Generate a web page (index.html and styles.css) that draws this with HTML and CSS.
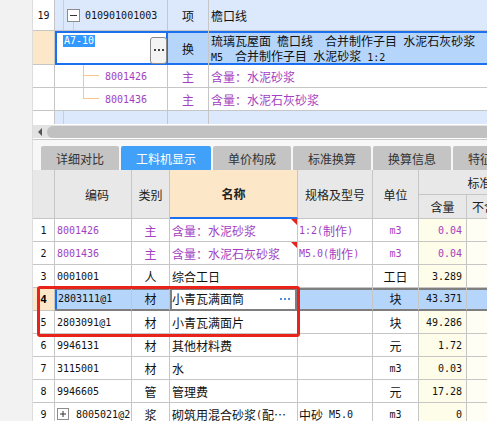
FILE: index.html
```html
<!DOCTYPE html>
<html lang="zh-CN">
<head>
<meta charset="utf-8">
<title>工料机显示</title>
<link rel="stylesheet" href="styles.css">
</head>
<body>
<div class="app">
  <div class="side"></div>
  <div class="main">
    <div class="tree">
      <div class="trow r19">
        <div class="c num"><span class="n">19</span></div>
        <div class="c code">
          <svg class="tl" width="30" height="31" viewBox="0 0 30 31">
            <line x1="8.5" y1="0" x2="8.5" y2="31" stroke="#f8c58a"/>
            <line x1="18.5" y1="22" x2="18.5" y2="31" stroke="#f8c58a"/>
            <rect x="12.5" y="9.5" width="12" height="12" fill="#fff" stroke="#8c8c8c"/>
            <line x1="15" y1="15.5" x2="22" y2="15.5" stroke="#333"/>
          </svg>
          <span class="n">010901001003</span>
        </div>
        <div class="c kind">项</div>
        <div class="c name">檐口线</div>
      </div>
      <div class="trow ra">
        <div class="c num cur"></div>
        <div class="c code edit">
          <span class="n seltext">A7-10</span>
          <span class="more">
            <svg width="10" height="3" viewBox="0 0 10 3">
              <rect x="0" y="0" width="2" height="2" fill="#444"/>
              <rect x="4" y="0" width="2" height="2" fill="#444"/>
              <rect x="8" y="0" width="2" height="2" fill="#444"/>
            </svg>
          </span>
        </div>
        <div class="c kind hl bar">换</div>
        <div class="c name hl bar two">
          <span>琉璃瓦屋面<span class="n"> </span>檐口线<span class="n">  </span>合并制作子目<span class="n"> </span>水泥石灰砂浆</span>
          <span><span class="n">M5  </span>合并制作子目<span class="n"> </span>水泥砂浆<span class="n"> 1:2</span></span>
        </div>
      </div>
      <div class="trow rb">
        <div class="c num w"></div>
        <div class="c code w">
          <svg class="tl" width="50" height="22" viewBox="0 0 50 22">
            <line x1="28.5" y1="0" x2="28.5" y2="22" stroke="#f8c58a"/>
            <line x1="28" y1="10.5" x2="44" y2="10.5" stroke="#f8c58a"/>
          </svg>
          <span class="n p">8001426</span>
        </div>
        <div class="c kind w p">主</div>
        <div class="c name w p">含量：水泥砂浆</div>
      </div>
      <div class="trow rb">
        <div class="c num w"></div>
        <div class="c code w">
          <svg class="tl" width="50" height="22" viewBox="0 0 50 22">
            <line x1="28.5" y1="0" x2="28.5" y2="11" stroke="#f8c58a"/>
            <line x1="28" y1="10.5" x2="44" y2="10.5" stroke="#f8c58a"/>
          </svg>
          <span class="n p">8001436</span>
        </div>
        <div class="c kind w p">主</div>
        <div class="c name w p">含量：水泥石灰砂浆</div>
      </div>
      <div class="trow re">
        <div class="c num w"></div>
        <div class="c code">
          <svg class="tl" width="30" height="13" viewBox="0 0 30 13">
            <line x1="8.5" y1="0" x2="8.5" y2="13" stroke="#f8c58a"/>
          </svg>
        </div>
        <div class="c kind"></div>
        <div class="c name"></div>
      </div>
    </div>

    <div class="hs">
      <div class="track">
        <span class="arrow"></span>
        <span class="thumb"></span>
      </div>
    </div>

    <div class="tabs">
      <div class="tab">详细对比</div>
      <div class="tab on">工料机显示</div>
      <div class="tab">单价构成</div>
      <div class="tab">标准换算</div>
      <div class="tab">换算信息</div>
      <div class="tab">特征</div>
    </div>

    <div class="grid">
      <div class="ghead">
        <div class="h hnum"></div>
        <div class="h hcode">编码</div>
        <div class="h hkind">类别</div>
        <div class="h hname">名称</div>
        <div class="h hspec">规格及型号</div>
        <div class="h hunit">单位</div>
        <div class="h hstd">标准</div>
        <div class="h hqty">含量</div>
        <div class="h hother">不含税</div>
      </div>

      <div class="grow">
        <div class="c num"><span class="n">1</span></div>
        <div class="c code"><span class="n p">8001426</span></div>
        <div class="c kind p">主</div>
        <div class="c name p tri">含量：水泥砂浆</div>
        <div class="c spec p"><span class="n">1:2(</span>制作<span class="n">)</span></div>
        <div class="c unit p"><span class="n">m3</span></div>
        <div class="c qty p"><span class="n">0.04</span></div>
        <div class="c last"></div>
      </div>
      <div class="grow">
        <div class="c num"><span class="n">2</span></div>
        <div class="c code"><span class="n p">8001436</span></div>
        <div class="c kind p">主</div>
        <div class="c name p tri">含量：水泥石灰砂浆</div>
        <div class="c spec p"><span class="n">M5.0(</span>制作<span class="n">)</span></div>
        <div class="c unit p"><span class="n">m3</span></div>
        <div class="c qty p"><span class="n">0.04</span></div>
        <div class="c last"></div>
      </div>
      <div class="grow">
        <div class="c num"><span class="n">3</span></div>
        <div class="c code"><span class="n">0001001</span></div>
        <div class="c kind">人</div>
        <div class="c name">综合工日</div>
        <div class="c spec"></div>
        <div class="c unit">工日</div>
        <div class="c qty"><span class="n">3.289</span></div>
        <div class="c last"></div>
      </div>
      <div class="grow sel">
        <div class="c num cur"><span class="n b">4</span></div>
        <div class="c code hl lb"><span class="n">2803111@1</span></div>
        <div class="c kind hl">材</div>
        <div class="c name ed">小青瓦满面筒
          <svg class="dots" width="10" height="2" viewBox="0 0 10 2">
            <rect x="0" y="0" width="2" height="2" fill="#4a8fdc"/>
            <rect x="4" y="0" width="2" height="2" fill="#4a8fdc"/>
            <rect x="8" y="0" width="2" height="2" fill="#4a8fdc"/>
          </svg>
        </div>
        <div class="c spec hl"></div>
        <div class="c unit hl">块</div>
        <div class="c qty hl"><span class="n">43.371</span></div>
        <div class="c last hl"></div>
      </div>
      <div class="grow">
        <div class="c num"><span class="n">5</span></div>
        <div class="c code"><span class="n">2803091@1</span></div>
        <div class="c kind">材</div>
        <div class="c name">小青瓦满面片</div>
        <div class="c spec"></div>
        <div class="c unit">块</div>
        <div class="c qty"><span class="n">49.286</span></div>
        <div class="c last"></div>
      </div>
      <div class="grow">
        <div class="c num"><span class="n">6</span></div>
        <div class="c code"><span class="n">9946131</span></div>
        <div class="c kind">材</div>
        <div class="c name">其他材料费</div>
        <div class="c spec"></div>
        <div class="c unit">元</div>
        <div class="c qty"><span class="n">1.72</span></div>
        <div class="c last"></div>
      </div>
      <div class="grow">
        <div class="c num"><span class="n">7</span></div>
        <div class="c code"><span class="n">3115001</span></div>
        <div class="c kind">材</div>
        <div class="c name">水</div>
        <div class="c spec"></div>
        <div class="c unit"><span class="n">m3</span></div>
        <div class="c qty"><span class="n">0.03</span></div>
        <div class="c last"></div>
      </div>
      <div class="grow">
        <div class="c num"><span class="n">8</span></div>
        <div class="c code"><span class="n">9946605</span></div>
        <div class="c kind">管</div>
        <div class="c name">管理费</div>
        <div class="c spec"></div>
        <div class="c unit">元</div>
        <div class="c qty"><span class="n">17.28</span></div>
        <div class="c last"></div>
      </div>
      <div class="grow">
        <div class="c num"><span class="n">9</span></div>
        <div class="c code">
          <svg class="plus" width="12" height="12" viewBox="0 0 12 12">
            <rect x="0.5" y="0.5" width="11" height="11" fill="#fff" stroke="#8c8c8c"/>
            <line x1="3" y1="6" x2="9" y2="6" stroke="#333"/>
            <line x1="6" y1="3" x2="6" y2="9" stroke="#333"/>
          </svg>
          <span class="n">8005021@2</span>
        </div>
        <div class="c kind">浆</div>
        <div class="c name">砌筑用混合砂浆<span class="n">(</span>配…</div>
        <div class="c spec">中砂<span class="n"> M5.0</span></div>
        <div class="c unit"><span class="n">m3</span></div>
        <div class="c qty"><span class="n">0</span></div>
        <div class="c last"></div>
      </div>
    </div>

    <div class="redbox"></div>
  </div>
</div>
</body>
</html>
```

FILE: styles.css
```css
* {
  box-sizing: border-box;
  margin: 0;
  padding: 0;
}

html,
body {
  width: 487px;
  height: 421px;
  overflow: hidden;
  background: #fff;
}

body {
  font-family: "Noto Sans CJK SC", "Noto Sans", sans-serif;
  font-size: 12px;
  color: #111;
}

.app {
  display: flex;
  height: 421px;
}

.side {
  width: 33px;
  flex: none;
  background: #f2f2f2;
  border-right: 1px solid #dddddd;
}

.main {
  position: relative;
  width: 454px;
  flex: none;
  overflow: hidden;
}

.n {
  font-family: "DejaVu Sans Mono", "Liberation Mono", monospace;
  font-size: 10px;
  white-space: pre;
}

.b {
  font-weight: 700;
  font-size: 11px;
}

.p {
  color: #a33fc2;
}

/* ---------- generic cell ---------- */
.c {
  display: flex;
  align-items: center;
  white-space: nowrap;
  overflow: hidden;
  border-right: 1px solid #c6c6c6;
  border-bottom: 1px solid #c6c6c6;
  position: relative;
}

/* ---------- top tree grid ---------- */
.tree {
  width: 454px;
}

.trow {
  display: grid;
  grid-template-columns: 22px 113px 41px 300px;
}

.trow .c {
  background: #dce9fc;
}

.trow .num {
  background: #fff;
  justify-content: center;
}

.trow .kind {
  justify-content: center;
}

.trow .name {
  padding-left: 2px;
}

.trow .w {
  background: #fff;
}

.r19 {
  height: 31px;
}

.tl {
  flex: none;
  display: block;
  align-self: flex-start;
}

.ra {
  height: 34px;
}

.ra .cur {
  background: #fde7c9;
}

.ra .edit {
  background: #fff;
  border: none;
  box-shadow: inset 0 0 0 2px #1b6ff0;
  align-items: flex-start;
  padding: 4px 1px 0 8px;
}

.seltext {
  background: #3399ff;
  color: #fff;
  line-height: 12px;
  padding: 0 1px;
}

.more {
  margin-left: auto;
  align-self: center;
  width: 17px;
  height: 27px;
  border: 1px solid #8a8a8a;
  border-radius: 3px;
  background: #f4f4f4;
  display: flex;
  align-items: center;
  justify-content: center;
}

.more svg {
  display: block;
}

.trow .hl {
  background: #b6d5fb;
}

.bar {
  border-bottom: none;
  box-shadow: inset 0 2px 0 #1b6ff0, inset 0 -2px 0 #1b6ff0;
}

.two {
  flex-direction: column;
  align-items: flex-start;
  justify-content: center;
  line-height: 13px;
  padding-top: 1px;
}

.rb {
  height: 23px;
}

.re {
  height: 13px;
}

.re .c {
  border-bottom: none;
}

/* ---------- horizontal scrollbar ---------- */
.hs {
  height: 16px;
  padding-top: 1px;
  border-bottom: 1px solid #c8c8c8;
  background: #fff;
}

.track {
  height: 13px;
  background: #e2e2e2;
  display: flex;
  align-items: center;
  padding-left: 5px;
}

.arrow {
  width: 0;
  height: 0;
  border-top: 4px solid transparent;
  border-bottom: 4px solid transparent;
  border-right: 4px solid #555;
  flex: none;
}

.thumb {
  flex: 1;
  height: 12px;
  margin-left: 5px;
  border-radius: 6px 0 0 6px;
  background: #c1c1c1;
}

/* ---------- tabs ---------- */
.tabs {
  height: 30px;
  display: flex;
  gap: 2px;
  padding: 6px 0 0 8px;
  background: #f7f7f7;
  overflow: hidden;
}

.tab {
  flex: none;
  height: 24px;
  padding: 0 15px;
  display: flex;
  align-items: center;
  background: #c4c4c4;
  color: #333;
  border-radius: 2px 2px 0 0;
}

.tab.on {
  background: #41a0f8;
  color: #fff;
}

/* ---------- bottom grid ---------- */
.grid {
  width: 508px;
}

.ghead {
  display: grid;
  grid-template-columns: 22px 77px 38px 128px 75px 46px 48px 74px;
  grid-template-rows: 25px 24px;
}

.h {
  background: #e8e8e8;
  border-right: 1px solid #c6c6c6;
  border-bottom: 1px solid #c6c6c6;
  display: flex;
  align-items: center;
  justify-content: center;
  white-space: nowrap;
  overflow: hidden;
  color: #222;
}

.hnum,
.hcode,
.hkind,
.hname,
.hspec,
.hunit {
  grid-row: 1 / 3;
}

.hcode {
  padding-left: 8px;
}

.hname {
  background: #fde7c9;
  font-weight: 700;
  border-bottom: 2px solid #1b6ff0;
}

.hstd {
  grid-column: 7 / 9;
}

.hqty {
  grid-column: 7;
  grid-row: 2;
}

.hother {
  grid-column: 8;
  grid-row: 2;
  justify-content: flex-start;
  padding-left: 5px;
}

.grow {
  display: grid;
  grid-template-columns: 22px 77px 38px 128px 75px 46px 48px 74px;
  height: 23px;
}

.grow .num {
  justify-content: center;
  background: #fff;
}

.grow .code {
  padding-left: 2px;
}

.grow .kind {
  justify-content: center;
}

.grow .name {
  padding-left: 2px;
}

.grow .spec {
  padding-left: 1px;
}

.grow .unit {
  justify-content: center;
}

.grow .qty {
  justify-content: flex-end;
  padding-right: 4px;
  background: #fdfde9;
}

.grow .last {
  background: #fffef4;
}

.tri::after {
  content: "";
  position: absolute;
  top: 0;
  right: 0;
  border-top: 6px solid #e8231c;
  border-left: 6px solid transparent;
}

.plus {
  flex: none;
  margin: 0 7px 0 0;
}

/* selected row */
.grow.sel .num.cur {
  background: #fde7c9;
  color: #000;
}

.grow.sel .c:not(.num) {
  border-bottom: 2px solid #7f7f7f;
  box-shadow: inset 0 2px 0 #7f7f7f;
}

.grow .hl {
  background: #b6d5fb;
}

.grow.sel .c.lb {
  box-shadow: inset 0 2px 0 #7f7f7f, inset 2px 0 0 #1b6ff0;
  padding-left: 3px;
}

.grow.sel .c.ed {
  background: #fff;
  box-shadow: inset 0 2px 0 #7f7f7f, inset 2px 0 0 #7f7f7f, inset -2px 0 0 #7f7f7f;
}

.grow.sel .qty.hl {
  background: #b6d5fb;
}

.dots {
  display: block;
  flex: none;
  margin-left: auto;
  margin-right: 7px;
}

/* red annotation rectangle */
.redbox {
  position: absolute;
  left: 4px;
  top: 286px;
  width: 263px;
  height: 51px;
  border: 3px solid #e8231c;
  border-radius: 3px;
}
```
